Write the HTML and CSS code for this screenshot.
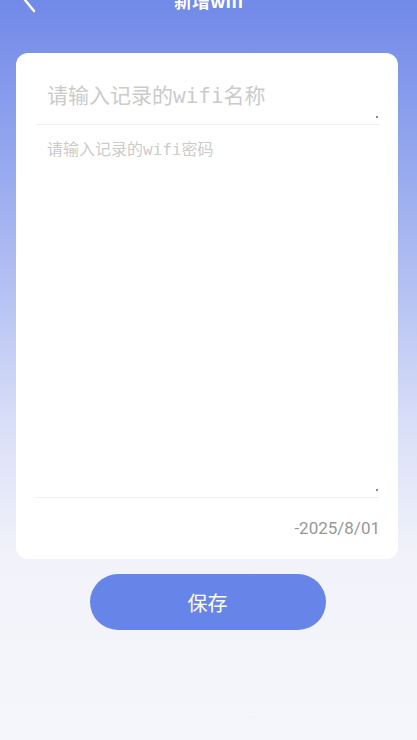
FILE: index.html
```html
<!DOCTYPE html>
<html>
<head>
    <meta charset="utf-8">
    <title>新增wifi</title>
    <link rel="stylesheet" href="styles.css">
</head>
<body>
    <div class="page">
        <div class="header">
            <span class="back">
                <svg width="20" height="28" viewBox="0 0 20 28"><path d="M14 3 L5 14 L14 25" fill="none" stroke="#fff" stroke-width="2.4" stroke-linecap="round" stroke-linejoin="round"/></svg>
            </span>
            <h1 class="title">新增wifi</h1>
        </div>

        <div class="card">
            <div class="field field-name">
                <input class="name-input" type="text" placeholder="请输入记录的wifi名称">
                <span class="dot"></span>
            </div>
            <div class="field field-pwd">
                <textarea class="pwd-input" placeholder="请输入记录的wifi密码"></textarea>
                <span class="dot"></span>
            </div>
            <div class="date">-2025/8/01</div>
        </div>

        <button class="save-btn">保存</button>
    </div>
</body>
</html>
```

FILE: styles.css
```css
html, body {
    margin: 0;
    padding: 0;
}

body {
    width: 417px;
    height: 740px;
    overflow: hidden;
    font-family: "Noto Sans CJK SC", sans-serif;
    background: linear-gradient(180deg, #7189e8 0, #93a6ee 150px, #b4c1f2 290px, #d8def8 420px, #f2f3fa 560px, #f5f6fb 100%);
}

.page {
    display: flex;
    flex-direction: column;
}

/* top bar, half scrolled out of view */
.header {
    margin-top: -22px;
    height: 44px;
    display: flex;
    align-items: center;
    justify-content: center;
    position: relative;
}

.back {
    position: absolute;
    left: 20px;
    top: 8px;
    display: flex;
}

.title {
    margin: 0;
    font-size: 18px;
    font-weight: bold;
    color: #fff;
    line-height: 44px;
}

.card {
    margin: 31px 19px 0 16px;
    background-color: #fff;
    border-radius: 12px;
    padding: 0 18px 0 19px;
    display: flex;
    flex-direction: column;
}

.field {
    position: relative;
    border-bottom: 1px solid #f1f1f3;
}

.field-name {
    height: 71px;
    display: flex;
    align-items: center;
}

.field-pwd {
    height: 372px;
}

.name-input,
.pwd-input {
    border: none;
    outline: none;
    background: transparent;
    width: 100%;
    box-sizing: border-box;
    padding: 0 0 0 12px;
    font-family: "DejaVu Sans Mono", "Noto Sans CJK SC", monospace;
    color: #333;
}

.name-input {
    font-size: 21px;
    height: 40px;
    margin-top: 15px;
}

.pwd-input {
    font-size: 16px;
    height: 100%;
    resize: none;
    padding-top: 13px;
    line-height: 24px;
}

.name-input::placeholder,
.pwd-input::placeholder {
    color: #cbcbcb;
}

.dot {
    position: absolute;
    right: 2px;
    bottom: 6px;
    width: 2px;
    height: 2px;
    background-color: #8a8a8a;
}

.date {
    height: 61px;
    display: flex;
    align-items: center;
    justify-content: flex-end;
    font-family: Roboto, sans-serif;
    font-size: 17px;
    color: #979797;
    padding-bottom: 2px;
    box-sizing: border-box;
}

.save-btn {
    margin: 15px auto 0;
    width: 236px;
    height: 56px;
    border: none;
    border-radius: 28px;
    background-color: #6785e8;
    color: #fff;
    font-family: "Noto Sans CJK SC", sans-serif;
    font-size: 20px;
    cursor: pointer;
    position: relative;
    left: -1px;
}
```
